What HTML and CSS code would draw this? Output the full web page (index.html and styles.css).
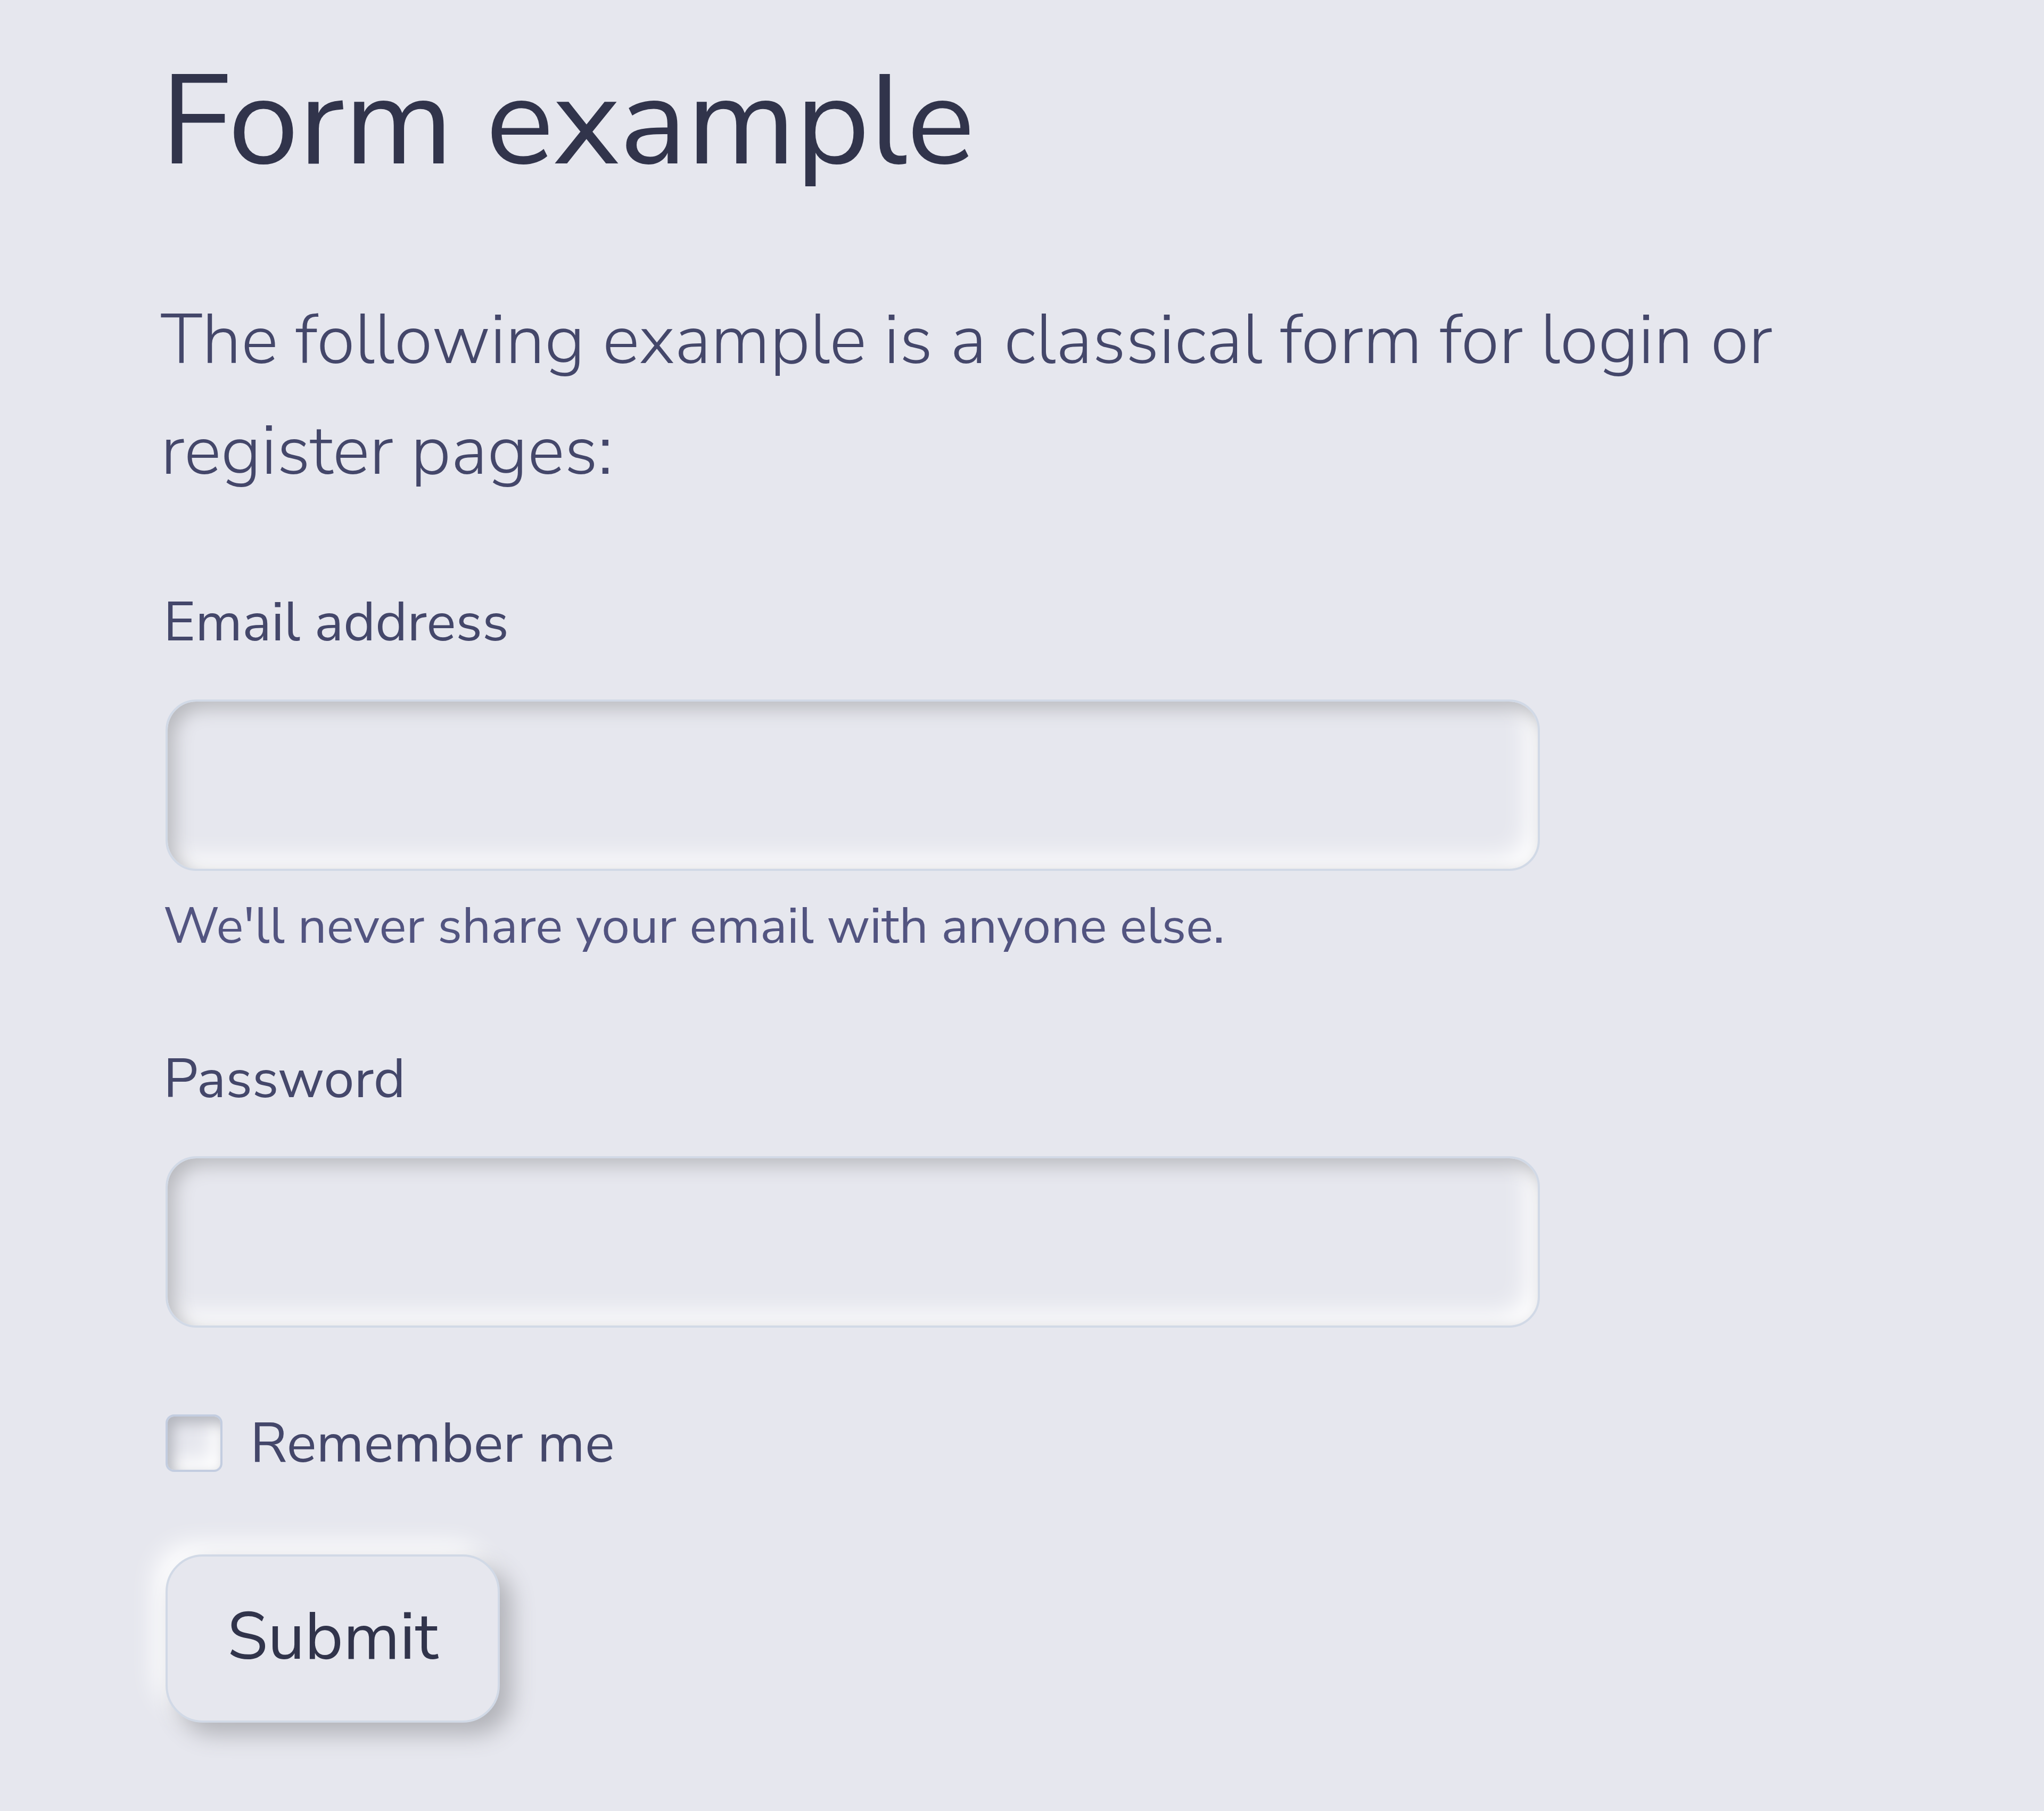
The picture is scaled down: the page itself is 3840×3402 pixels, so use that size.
FILE: index.html
```html
<!DOCTYPE html>
<html lang="en">
<head>
    <meta charset="UTF-8">
    <meta name="viewport" content="width=device-width, initial-scale=1.0">
    <title>Form example</title>
    <link rel="stylesheet" href="styles.css">
</head>
<body>
    <div class="page">
        <h1 class="titulo">Form example</h1>
        <p class="lead">The following example is a classical form for login or register pages:</p>

        <form class="login-form">
            <label class="field-label" for="email">Email address</label>
            <input class="field-input" type="email" id="email">
            <small class="field-help">We'll never share your email with anyone else.</small>

            <label class="field-label" for="password">Password</label>
            <input class="field-input" type="password" id="password">

            <div class="check-row">
                <input class="check-box" type="checkbox" id="remember">
                <label class="check-label" for="remember">Remember me</label>
            </div>

            <button class="submit-btn" type="submit">Submit</button>
        </form>
    </div>
</body>
</html>
```

FILE: styles.css
```css
html, body {
    margin: 0;
    background-color: #e6e7ee;
}

body {
    font-family: "Nunito Sans", Lato, "Open Sans", sans-serif;
    color: #44476a;
}

.page {
    padding: 85px 0 160px 302px;
}

.titulo {
    margin: 0;
    font-size: 239px;
    font-weight: 400;
    line-height: 1.2;
    color: #31344b;
}

.lead {
    width: 3250px;
    margin: 163px 0 0 0;
    font-size: 131px;
    line-height: 208px;
    font-weight: 300;
}

.login-form {
    display: flex;
    flex-direction: column;
    align-items: flex-start;
}

.field-label {
    display: block;
    margin: 138px 0 0 5px;
    font-size: 103px;
    line-height: 160px;
}

.field-input {
    box-sizing: border-box;
    width: 2582px;
    height: 322px;
    margin: 65px 0 0 9px;
    padding: 0 60px;
    border: 4px solid #d1d9e6;
    border-radius: 58px;
    background-color: #e6e7ee;
    box-shadow: inset 13px 13px 34px #b8b9be, inset -20px -20px 47px #ffffff;
    font-family: inherit;
    font-size: 103px;
    color: #44476a;
    outline: none;
}

.field-help {
    display: block;
    margin: 33px 0 0 5px;
    font-size: 95.5px;
    line-height: 142px;
    color: #525480;
}

/* o segundo label fica mais perto do texto de ajuda */
.field-help + .field-label {
    margin-top: 136px;
}

.check-row {
    display: flex;
    align-items: center;
    margin: 155px 0 0 9px;
}

.check-box {
    appearance: none;
    -webkit-appearance: none;
    box-sizing: border-box;
    width: 107px;
    height: 108px;
    margin: 0;
    border: 4px solid #c3cde0;
    border-radius: 16px;
    background-color: #e6e7ee;
    box-shadow: inset 10px 12px 26px #b3b5bd, inset -18px -18px 36px #ffffff;
}

.check-label {
    margin-left: 52px;
    font-size: 104.5px;
    line-height: 1.2;
    color: #44476a;
}

.submit-btn {
    box-sizing: border-box;
    width: 628px;
    height: 316px;
    margin: 146px 0 0 9px;
    padding: 0 0 4px 0;
    border: 4px solid #d1d9e6;
    border-radius: 70px;
    background-color: #e6e7ee;
    box-shadow: 22px 22px 44px #b1b2b8, -20px -20px 47px #ffffff;
    font-family: inherit;
    font-size: 124px;
    line-height: 1.2;
    color: #31344b;
}
```
